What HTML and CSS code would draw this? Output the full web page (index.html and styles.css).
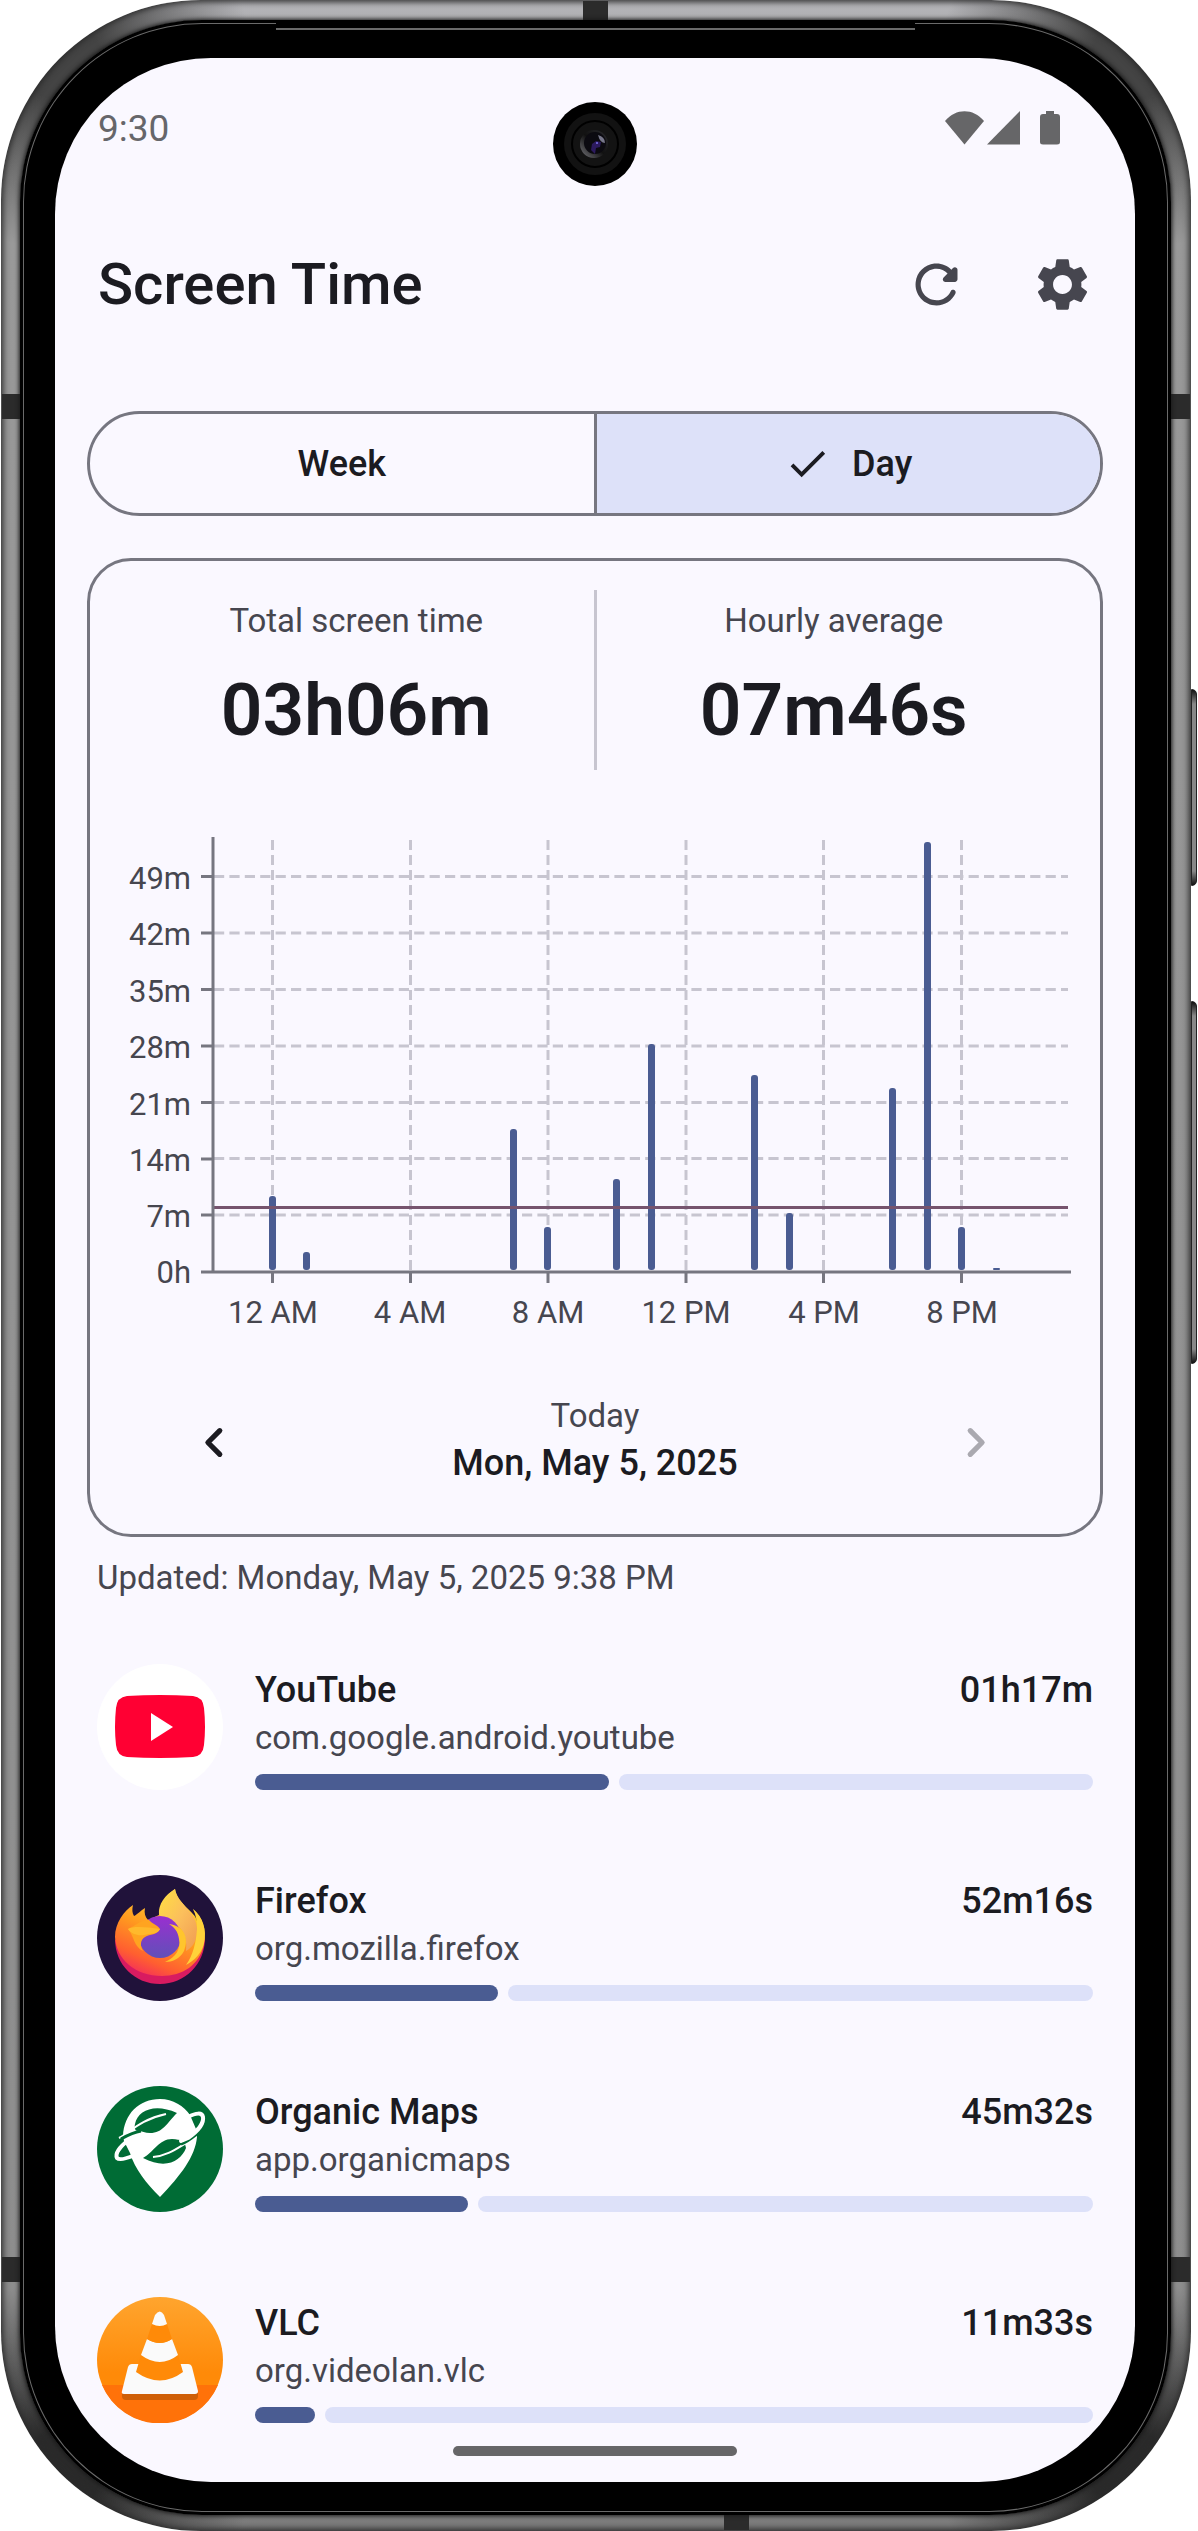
FILE: index.html
```html
<!DOCTYPE html>
<html lang="en">
<head>
    <meta charset="UTF-8">
    <meta name="viewport" content="width=device-width, initial-scale=1.0">
    <title>Screen Time</title>
    <link rel="stylesheet" href="styles.css">
</head>
<body>

    <div class="phone">
        <span class="seam seam-top"></span>
        <span class="seam seam-bottom"></span>
        <span class="seam seam-side seam-upper"></span>
        <span class="seam seam-side seam-lower"></span>
        <span class="side-key key-power"></span>
        <span class="side-key key-volume"></span>

        <div class="bezel">
            <div class="earpiece"></div>
            <div class="screen">
                <svg class="camera" viewBox="0 0 84 84" aria-hidden="true">
                    <defs>
                        <linearGradient id="lens" x1="1" y1="0" x2="0" y2="1">
                            <stop offset="0" stop-color="#2a2a2e"/>
                            <stop offset="0.5" stop-color="#111"/>
                            <stop offset="1" stop-color="#77777c"/>
                        </linearGradient>
                    </defs>
                    <circle cx="42" cy="42" r="42" fill="#000"/>
                    <circle cx="42" cy="42" r="31" fill="#121212"/>
                    <circle cx="42" cy="42" r="23" fill="#131313" stroke="#000" stroke-width="2"/>
                    <circle cx="41" cy="42" r="14" fill="url(#lens)"/>
                    <circle cx="42" cy="41" r="11" fill="#0b0a10"/>
                    <path d="M45 33Q52 35 52 41Q47 41 45 33z" fill="#77778a"/>
                    <path d="M43 39l5 1-1 5-4 1-1 6-4-4 1-6z" fill="#2c1a5e"/>
                    <circle cx="44" cy="41" r="1" fill="#7a70f0"/>
                </svg>

                <div class="status-bar">
                    <span>9:30</span>
                    <svg class="status-icons" viewBox="0 0 116 34" aria-hidden="true">
                        <path d="M0 10C11-3 28-3 39 10L19.500 33.500z"/>
                        <path d="M75 0v33.500H42z"/>
                        <path d="M101 0h8v3h3q3 0 3 3v25q0 2.500-3 2.500H98q-3 0-3-2.500V6q0-3 3-3h3z"/>
                    </svg>
                </div>

                <header class="app-bar">
                    <h1>Screen Time</h1>
                    <button type="button" class="icon-button" aria-label="Refresh">
                        <svg viewBox="0 0 24 24"><path d="M17.650 6.350c-1.630-1.630-3.940-2.570-6.480-2.310-3.670.37-6.690 3.350-7.100 7.020C3.520 15.910 7.270 20 12 20c3.190 0 5.930-1.870 7.210-4.560.32-.67-.16-1.440-.9-1.440-.37 0-.72.2-.88.530-1.130 2.430-3.840 3.970-6.800 3.310-2.220-.49-4.010-2.300-4.480-4.520C5.310 9.440 8.260 6 12 6c1.660 0 3.140.69 4.220 1.780l-1.510 1.510c-.63.63-.19 1.710.7 1.710H19c.55 0 1-.45 1-1V6.410c0-.89-1.080-1.340-1.710-.71z"/></svg>
                    </button>
                    <button type="button" class="icon-button" aria-label="Settings">
                        <svg viewBox="0 0 24 24"><path d="M19.140 12.940c.04-.3.060-.61.060-.94 0-.32-.02-.64-.07-.94l2.030-1.580c.18-.14.23-.41.120-.61l-1.920-3.320c-.12-.22-.37-.29-.59-.22l-2.390.96c-.5-.38-1.030-.7-1.620-.94L14.400 2.810c-.04-.24-.24-.41-.48-.41h-3.840c-.24 0-.43.17-.47.41L9.250 5.350c-.59.24-1.130.57-1.620.94l-2.390-.96c-.22-.08-.47 0-.59.22L2.740 8.870c-.12.210-.08.470.12.610l2.030 1.580c-.05.3-.09.63-.09.94s.02.64.07.94l-2.030 1.580c-.18.14-.23.41-.12.61l1.920 3.320c.12.22.37.29.59.22l2.390-.96c.5.38 1.030.7 1.620.94l.36 2.540c.05.24.24.41.48.41h3.840c.24 0 .44-.17.47-.41l.36-2.540c.59-.24 1.130-.56 1.620-.94l2.390.96c.22.08.47 0 .59-.22l1.920-3.320c.12-.22.07-.47-.12-.61zM12 15.600c-1.980 0-3.600-1.620-3.600-3.600s1.620-3.600 3.600-3.600 3.600 1.620 3.600 3.600-1.620 3.600-3.600 3.600z"/></svg>
                    </button>
                </header>

                <div class="segmented" role="group" aria-label="Range">
                    <button type="button" aria-pressed="false">Week</button>
                    <button type="button" class="selected" aria-pressed="true">
                        <svg viewBox="0 0 24 24" aria-hidden="true"><path d="M9 16.200L4.800 12l-1.400 1.400L9 19 21 7l-1.400-1.400z"/></svg>
                        Day
                    </button>
                </div>

                <section class="card">
                    <div class="stats">
                        <div class="stat">
                            <div class="label">Total screen time</div>
                            <div class="value">03h06m</div>
                        </div>
                        <div class="stat">
                            <div class="label">Hourly average</div>
                            <div class="value">07m46s</div>
                        </div>
                    </div>

                    <svg class="chart" viewBox="0 0 952 520" role="img" aria-label="Screen time by hour">
                        <path class="grid-v" d="M153.500 20V452M291.500 20V452M429 20V452M567 20V452M704.500 20V452M842.500 20V452"/>
                        <path class="grid-h" d="M95 56.500H949M95 113H949M95 169.500H949M95 226H949M95 282.500H949M95 338.500H949M95 395H949"/>
                        <g class="bars">
                            <rect x="150" y="376" width="7" height="74" rx="3"/>
                            <rect x="184" y="432" width="7" height="18" rx="3"/>
                            <rect x="391" y="309" width="7" height="141" rx="3"/>
                            <rect x="425" y="407" width="7" height="43" rx="3"/>
                            <rect x="494" y="359" width="7" height="91" rx="3"/>
                            <rect x="529" y="224" width="7" height="226" rx="3"/>
                            <rect x="632" y="255" width="7" height="195" rx="3"/>
                            <rect x="667" y="393" width="7" height="57" rx="3"/>
                            <rect x="770" y="268" width="7" height="182" rx="3"/>
                            <rect x="805" y="22" width="7" height="428" rx="3"/>
                            <rect x="839" y="407" width="7" height="43" rx="3"/>
                            <rect x="874" y="448" width="7" height="2" rx="1"/>
                        </g>
                        <path class="average" d="M95 387.500H949"/>
                        <path class="axis" d="M94 17V452M82 452H952M82 56.500H94M82 113H94M82 169.500H94M82 226H94M82 282.500H94M82 339H94M82 395H94M153.500 452V463M291.500 452V463M429 452V463M567 452V463M704.500 452V463M842.500 452V463"/>
                        <g class="y-labels">
                            <text x="72" y="69">49m</text>
                            <text x="72" y="125">42m</text>
                            <text x="72" y="182">35m</text>
                            <text x="72" y="238">28m</text>
                            <text x="72" y="295">21m</text>
                            <text x="72" y="351">14m</text>
                            <text x="72" y="407">7m</text>
                            <text x="72" y="463">0h</text>
                        </g>
                        <g class="x-labels">
                            <text x="154" y="503">12 AM</text>
                            <text x="291" y="503">4 AM</text>
                            <text x="429" y="503">8 AM</text>
                            <text x="567" y="503">12 PM</text>
                            <text x="705" y="503">4 PM</text>
                            <text x="843" y="503">8 PM</text>
                        </g>
                    </svg>

                    <div class="day-nav">
                        <button type="button" class="icon-button chevron" aria-label="Previous day">
                            <svg viewBox="0 0 24 24"><path d="M14 7.500L9.500 12l4.500 4.500"/></svg>
                        </button>
                        <div class="day">
                            <div class="label">Today</div>
                            <div class="name">Mon, May 5, 2025</div>
                        </div>
                        <button type="button" class="icon-button chevron" aria-label="Next day" disabled>
                            <svg viewBox="0 0 24 24"><path d="M10 7.500l4.500 4.500-4.500 4.500"/></svg>
                        </button>
                    </div>
                </section>

                <p class="label updated">Updated: Monday, May 5, 2025 9:38 PM</p>

                <ul class="apps">
                    <li class="app">
                        <svg class="app-icon" viewBox="0 0 126 126" aria-hidden="true">
                            <circle cx="63" cy="63" r="63" fill="#fff"/>
                            <path d="M30 32Q63 30 96 32Q106 33 107 44Q109 63 107 81Q106 92 96 93Q63 95 30 93Q20 92 19 81Q17 63 19 44Q20 33 30 32z" fill="#ff0033"/>
                            <path d="M54 49v28l22-14z" fill="#fff"/>
                        </svg>
                        <div class="app-info">
                            <div class="app-head"><span class="name">YouTube</span><span class="name">01h17m</span></div>
                            <div class="label">com.google.android.youtube</div>
                            <div class="usage"><span class="used" style="width: 42.3%"></span><span class="rest"></span></div>
                        </div>
                    </li>
                    <li class="app">
                        <svg class="app-icon" viewBox="0 0 126 126" aria-hidden="true">
                            <defs>
                                <linearGradient id="fox" x1="0.7" y1="0.1" x2="0.3" y2="1">
                                    <stop offset="0" stop-color="#ffd93a"/>
                                    <stop offset="0.45" stop-color="#ff9a1f"/>
                                    <stop offset="0.8" stop-color="#ff5f30"/>
                                    <stop offset="1" stop-color="#f53058"/>
                                </linearGradient>
                                <linearGradient id="globe" x1="0" y1="0" x2="0" y2="1">
                                    <stop offset="0" stop-color="#9a2fd0"/>
                                    <stop offset="1" stop-color="#6050b8"/>
                                </linearGradient>
                                <linearGradient id="flame" x1="0" y1="0" x2="1" y2="1">
                                    <stop offset="0" stop-color="#ffe040"/>
                                    <stop offset="0.5" stop-color="#fbbf5c"/>
                                    <stop offset="1" stop-color="#f09a52"/>
                                </linearGradient>
                            </defs>
                            <circle cx="63" cy="63" r="63" fill="#20123a"/>
                            <path d="M18 64C18 90 38 109 63 109C88 109 108 89 108 63L92 84C70 100 35 92 18 64z" fill="#d81b60"/>
                            <path d="M36 30C35 34 35 38 37 41C40 40 44 35 48 33C47 38 48 42 51 45L62 40C62 30 68 21 78 14C80 29 98 36 100 46C100 41 98 37 96 34C105 42 110 54 107 69C103 90 85 101 65 101C38 101 19 84 18 62C18 48 27 36 36 30z" fill="url(#fox)"/>
                            <path d="M62 40C61 29 68 20 78 14C80 28 100 38 100 54C100 66 96 72 89 76C91 60 84 50 72 46z" fill="url(#flame)"/>
                            <path d="M96 34C106 42 110 55 107 68C105 78 97 86 89 90C96 80 99 68 100 54C100 46 99 40 96 34z" fill="#ffd23a"/>
                            <circle cx="63" cy="62" r="21" fill="url(#globe)"/>
                            <path d="M72 49C88 51 92 64 87 76C83 84 75 87 68 87C79 82 84 74 82 64C81 56 77 52 72 49z" fill="#ffc52d"/>
                            <path d="M31 54C39 50 48 43 52 45C55 49 61 50 63 54C60 60 53 59 48 62C43 65 43 71 46 76C37 72 37 61 31 54z" fill="#ffa420"/>
                            <path d="M31 54C36 51 49 52 63 54C60 60 54 58 47 60C41 61 34 59 31 54z" fill="#ffb92c"/>
                        </svg>
                        <div class="app-info">
                            <div class="app-head"><span class="name">Firefox</span><span class="name">52m16s</span></div>
                            <div class="label">org.mozilla.firefox</div>
                            <div class="usage"><span class="used" style="width: 29%"></span><span class="rest"></span></div>
                        </div>
                    </li>
                    <li class="app">
                        <svg class="app-icon" viewBox="0 0 126 126" aria-hidden="true">
                            <circle cx="63" cy="63" r="63" fill="#006c35"/>
                            <path d="M26 50C27 28 42 13 63 13C76 13 87 20 93 29L99 43L100 51C98 71 84 89 63 111C49 97 38 83 33 67L27 55z" fill="#fff"/>
                            <path d="M38 38C41 24 58 17 80 27C70 37 66 47 53 47C48 47 45 45 41 45C38 45 37 42 38 38z" fill="#006c35"/>
                            <path d="M22 52C34 46 42 34 69 28" fill="none" stroke="#fff" stroke-width="2"/>
                            <path d="M24 53C31 49 37 46 44 45" fill="none" stroke="#006c35" stroke-width="3"/>
                            <path d="M46 72C57 66 62 53 75 53C81 53 84 55 87 54L89 62C84 75 69 84 46 72z" fill="#006c35"/>
                            <path d="M56 71C71 70 80 62 99 51" fill="none" stroke="#fff" stroke-width="2"/>
                            <path d="M84 58C90 56 96 51 101 47" fill="none" stroke="#006c35" stroke-width="3"/>
                            <path d="M91 31C99 27 105 26 106 31C107 37 101 45 91 52L84 55M33 53C22 61 18 68 20 72C22 74 28 73 36 70" fill="none" stroke="#fff" stroke-width="4" stroke-linecap="round"/>
                            <path d="M96 34C104 29 104 36 99 41z" fill="#006c35"/>
                        </svg>
                        <div class="app-info">
                            <div class="app-head"><span class="name">Organic Maps</span><span class="name">45m32s</span></div>
                            <div class="label">app.organicmaps</div>
                            <div class="usage"><span class="used" style="width: 25.4%"></span><span class="rest"></span></div>
                        </div>
                    </li>
                    <li class="app">
                        <svg class="app-icon" viewBox="0 0 126 126" aria-hidden="true">
                            <defs>
                                <linearGradient id="sky" x1="0" y1="0" x2="0" y2="1">
                                    <stop offset="0" stop-color="#ffa52e"/>
                                    <stop offset="0.6" stop-color="#ff8a08"/>
                                </linearGradient>
                            </defs>
                            <circle cx="63" cy="63" r="63" fill="url(#sky)"/>
                            <path d="M5 88H121A63 63 0 0 1 5 88z" fill="#ff7209"/>
                            <path d="M25 96h76v3q0 4-4 4H29q-4 0-4-4z" fill="#cf5f06"/>
                            <path d="M35 67H91Q94 67 95 70L101 94Q101 97 98 97H27Q24 97 25 94L31 70Q32 67 35 67z" fill="#fafafa"/>
                            <path d="M44 58Q63 72 81 58L86 75Q63 92 39 75z" fill="#ff8a08"/>
                            <path d="M50 42Q63 50 75 42L81 58Q63 72 44 58z" fill="#fafafa"/>
                            <path d="M55 27Q63 31 70 27L75 42Q63 50 50 42z" fill="#ff8a08"/>
                            <path d="M55 27L58 18Q63 11 67 18L70 27Q63 31 55 27z" fill="#fafafa"/>
                        </svg>
                        <div class="app-info">
                            <div class="app-head"><span class="name">VLC</span><span class="name">11m33s</span></div>
                            <div class="label">org.videolan.vlc</div>
                            <div class="usage"><span class="used" style="width: 7.2%"></span><span class="rest"></span></div>
                        </div>
                    </li>
                </ul>

                <div class="home-bar"></div>
            </div>
        </div>
    </div>

</body>
</html>
```
FILE: styles.css
```css
* {
    box-sizing: border-box;
}
body {
    margin: 0;
    background-color: #fff;
    font-family: Roboto, "Liberation Sans", sans-serif;
    color: #1b1b21;
}
h1, p, ul {
    margin: 0;
    padding: 0;
}
button {
    font: inherit;
    color: inherit;
    background: none;
    border: none;
    padding: 0;
}

/* phone body */
.phone {
    position: relative;
    margin: 0 7px 0 1px;
    padding: 20px 20px 16px 19px;
    border-radius: 200px;
    background:
        radial-gradient(circle at 60px 60px, #444 40px, transparent 190px),
        radial-gradient(circle at calc(100% - 60px) 60px, #444 40px, transparent 190px),
        radial-gradient(circle at 60px calc(100% - 60px), #2a2a2a 40px, transparent 190px),
        radial-gradient(circle at calc(100% - 60px) calc(100% - 60px), #2a2a2a 40px, transparent 190px),
        linear-gradient(#b8b8bc, #9a9a9a 60px, #8c8c8c calc(100% - 60px), #7a7a7a);
    box-shadow: inset 0 0 6px 2px #2a2a2a;
}
.bezel {
    position: relative;
    padding: 38px 36px 33px 35px;
    border-radius: 182px;
    background-color: #000;
    box-shadow: 0 0 4px 1px #1a1a1a, inset 0 0 0 3px #000, inset 0 0 0 4px #6a6a6a;
}
.earpiece {
    position: absolute;
    top: 1px;
    left: 256px;
    right: 256px;
    height: 9px;
    background-color: #000;
    border-bottom: 2px solid #6a6a6a;
}
.screen {
    position: relative;
    padding-bottom: 26px;
    border-radius: 156px;
    background-color: #faf8ff;
}
.seam {
    position: absolute;
    background-color: #2b2b2b;
}
.seam-top {
    top: 1px;
    left: 582px;
    width: 25px;
    height: 19px;
}
.seam-bottom {
    bottom: 1px;
    left: 723px;
    width: 25px;
    height: 15px;
}
.seam-side {
    left: 1px;
    right: 1px;
    height: 25px;
}
.seam-upper {
    top: 394px;
}
.seam-lower {
    bottom: 249px;
}
.side-key {
    position: absolute;
    left: 100%;
    width: 6px;
    border-radius: 0 5px 5px 0;
    background: linear-gradient(#111, #888 14px, #888 calc(100% - 14px), #111);
    border: 1px solid #222;
}
.key-power {
    top: 689px;
    height: 197px;
}
.key-volume {
    top: 1001px;
    height: 363px;
}
.camera {
    position: absolute;
    top: 44px;
    left: calc(50% - 42px);
    width: 84px;
    height: 84px;
}

/* top of the screen */
.status-bar {
    display: flex;
    justify-content: space-between;
    align-items: center;
    height: 142px;
    padding: 0 74px 2px 43px;
    font-size: 37px;
    color: #66666a;
}
.status-icons {
    width: 116px;
    height: 34px;
    fill: #666668;
}
.app-bar {
    display: flex;
    align-items: center;
    height: 168px;
    padding: 0 10px 0 43px;
}
.app-bar h1 {
    flex: 1;
    font-size: 58px;
    font-weight: 500;
}
.icon-button {
    display: flex;
    align-items: center;
    justify-content: center;
    width: 126px;
    height: 126px;
}
.icon-button svg {
    width: 63px;
    height: 63px;
    fill: #46464f;
}
.segmented {
    display: flex;
    height: 105px;
    margin: 43px 32px 42px;
    border: 3px solid #767680;
    border-radius: 53px;
    overflow: hidden;
}
.segmented button {
    flex: 1;
    display: flex;
    align-items: center;
    justify-content: center;
    gap: 21px;
    font-size: 36px;
    font-weight: 500;
}
.segmented .selected {
    background-color: #dde1f9;
    border-left: 3px solid #767680;
}
.segmented svg {
    width: 47px;
    height: 47px;
    fill: #1b1b21;
}

/* shared text */
.label {
    font-size: 33px;
    line-height: 42px;
    color: #46464f;
}
.name {
    font-size: 36px;
    line-height: 53px;
    font-weight: 500;
}

/* summary card */
.card {
    margin: 0 32px;
    padding: 29px;
    border: 3px solid #767680;
    border-radius: 44px;
}
.stats {
    display: flex;
    margin-bottom: 50px;
}
.stat {
    flex: 1;
    padding: 10px 0 12px;
    text-align: center;
}
.stat + .stat {
    border-left: 3px solid #c7c5d0;
}
.value {
    margin-top: 21px;
    font-size: 73px;
    line-height: 95px;
    font-weight: 600;
}
.chart {
    display: block;
    width: 100%;
}
.grid-v, .grid-h {
    fill: none;
    stroke: #c7c5d0;
    stroke-width: 3;
    stroke-dasharray: 10 5;
}
.grid-h {
    stroke-dasharray: 10.2 5.2;
}
.axis {
    fill: none;
    stroke: #767680;
    stroke-width: 3;
}
.bars {
    fill: #4a5c92;
}
.average {
    stroke: #76546e;
    stroke-width: 3;
}
.chart text {
    font-size: 31px;
    fill: #46464f;
}
.y-labels {
    text-anchor: end;
}
.x-labels {
    text-anchor: middle;
}
.day-nav {
    display: flex;
    align-items: center;
    justify-content: space-between;
    margin-top: 39px;
    padding: 0 32px;
    text-align: center;
}
.chevron svg {
    fill: none;
    stroke: #1b1b21;
    stroke-width: 2;
    stroke-linecap: round;
    stroke-linejoin: round;
}
.chevron:disabled svg {
    stroke: #aaa9b0;
}

/* app list */
.updated {
    margin: 20px 42px 65px;
}
.apps {
    display: flex;
    flex-direction: column;
    gap: 85px;
    padding: 0 42px;
    list-style: none;
}
.app {
    display: flex;
    gap: 32px;
}
.app-icon {
    width: 126px;
    height: 126px;
}
.app-info {
    flex: 1;
}
.app-head {
    display: flex;
    justify-content: space-between;
}
.usage {
    display: flex;
    gap: 10px;
    height: 16px;
    margin-top: 15px;
}
.used, .rest {
    border-radius: 8px;
    background-color: #4a5c92;
}
.rest {
    flex: 1;
    background-color: #dde1f9;
}
.home-bar {
    width: 284px;
    height: 10px;
    margin: 23px auto 0;
    border-radius: 5px;
    background-color: #666668;
}
```
